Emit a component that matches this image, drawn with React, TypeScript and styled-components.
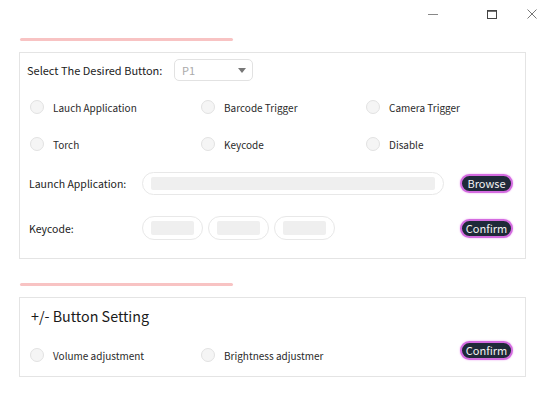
import React from "react";
import styled, { createGlobalStyle } from "styled-components";

const Global = createGlobalStyle`
  html, body { margin: 0; padding: 0; background: #ffffff; }
  body { font-family: "Noto Sans CJK SC", "Noto Sans", sans-serif; color: #222; }
  * { box-sizing: border-box; }
`;

const Page = styled.div`
  width: 547px;
  height: 405px;
  background: #fff;
  display: flex;
  flex-direction: column;
`;

const TitleBar = styled.div`
  height: 28px;
  display: flex;
  justify-content: flex-end;
  align-items: center;
  padding-right: 0;
`;

const WinBtn = styled.div<{ $gap: number }>`
  width: 30px;
  height: 28px;
  margin-left: ${(p) => p.$gap}px;
  display: flex;
  align-items: center;
  justify-content: center;
`;

const Accent = styled.div<{ $top: number }>`
  margin: ${(p) => p.$top}px 0 0 20px;
  width: 213px;
  height: 3px;
  border-radius: 2px;
  background: #f8c3c3;
`;

const Panel = styled.div<{ $top: number; $pt: number; $pb: number }>`
  margin: ${(p) => p.$top}px 0 0 19px;
  width: 507px;
  border: 1px solid #e4e4e4;
  padding: ${(p) => p.$pt}px 12px ${(p) => p.$pb}px 7px;
  display: flex;
  flex-direction: column;
`;

const Row = styled.div<{ $top?: number; $h: number; $left?: number }>`
  display: flex;
  align-items: center;
  height: ${(p) => p.$h}px;
  margin-top: ${(p) => p.$top ?? 0}px;
  padding-left: ${(p) => p.$left ?? 0}px;
`;

const Label = styled.div<{ $w: number; $fs: number }>`
  width: ${(p) => p.$w}px;
  font-size: ${(p) => p.$fs}px;
  color: #222;
  white-space: nowrap;
  flex: none;
`;

const Select = styled.div`
  width: 79px;
  height: 22px;
  border: 1px solid #e2e2e2;
  border-radius: 5px;
  display: flex;
  align-items: center;
  justify-content: space-between;
  padding: 0 6px 0 7px;
  font-size: 11px;
  color: #aaa;
`;

const Caret = styled.span`
  width: 0;
  height: 0;
  border-left: 4px solid transparent;
  border-right: 4px solid transparent;
  border-top: 5px solid #777;
`;

const RadioGrid = styled.div<{ $top: number }>`
  display: grid;
  grid-template-columns: 171px 165px auto;
  margin-top: ${(p) => p.$top}px;
  padding-left: 3px;
`;

const RadioItem = styled.label`
  display: flex;
  align-items: center;
  height: 16px;
  font-size: 10px;
  color: #2a2a2a;
  white-space: nowrap;
`;

const Circle = styled.span`
  width: 14px;
  height: 14px;
  border-radius: 50%;
  border: 1px solid #e2e2e2;
  background: #f5f5f5;
  margin-right: 9px;
  flex: none;
`;

const Field = styled.div<{ $w: number; $h: number }>`
  width: ${(p) => p.$w}px;
  height: ${(p) => p.$h}px;
  border: 1px solid #e8e8e8;
  border-radius: 12px;
  padding: 0 8px;
  display: flex;
  align-items: center;
  flex: none;
`;

const FieldFill = styled.div<{ $h: number }>`
  flex: 1;
  height: ${(p) => p.$h}px;
  background: #efefef;
  border-radius: 2px;
`;

const Fields = styled.div`
  display: flex;
  gap: 5px;
`;

const PillButton = styled.button<{ $mb?: number }>`
  margin-left: auto;
  margin-bottom: ${(p) => p.$mb ?? 0}px;
  width: 53px;
  height: 19px;
  border-radius: 10px;
  background: #1f2a39;
  border: 2px solid #d46be0;
  box-shadow: 0 0 2px #e9a0f0;
  color: #f2f2f2;
  font-family: "Noto Sans CJK SC", "Noto Sans", sans-serif;
  font-size: 11px;
  line-height: 1;
  padding: 0;
  display: flex;
  align-items: center;
  justify-content: center;
  flex: none;
`;

const Title = styled.div`
  font-size: 14.3px;
  line-height: 20px;
  color: #1a1a1a;
  padding-left: 4px;
`;

const BottomRow = styled.div<{ $top: number }>`
  display: flex;
  align-items: flex-end;
  margin-top: ${(p) => p.$top}px;
  height: 22px;
  padding-left: 3px;
`;

const BottomRadios = styled.div`
  display: grid;
  grid-template-columns: 171px auto;
`;

const Minimize = () => (
  <svg width="12" height="12" viewBox="0 0 12 12">
    <line x1="1" y1="6.5" x2="11" y2="6.5" stroke="#888" strokeWidth="1" />
  </svg>
);
const Maximize = () => (
  <svg width="12" height="12" viewBox="0 0 12 12">
    <rect x="1.5" y="2.5" width="9" height="8" fill="none" stroke="#444" strokeWidth="1" />
    <line x1="1.5" y1="3" x2="10.5" y2="3" stroke="#444" strokeWidth="1.5" />
  </svg>
);
const Close = () => (
  <svg width="12" height="12" viewBox="0 0 12 12">
    <path d="M1.5 1.5 L10.5 10.5 M10.5 1.5 L1.5 10.5" stroke="#777" strokeWidth="1" fill="none" />
  </svg>
);

const Radio = ({ text }: { text: string }) => (
  <RadioItem>
    <Circle />
    {text}
  </RadioItem>
);

export default function App() {
  return (
    <Page>
      <Global />
      <TitleBar>
        <WinBtn $gap={0}><Minimize /></WinBtn>
        <WinBtn $gap={29}><Maximize /></WinBtn>
        <WinBtn $gap={10}><Close /></WinBtn>
      </TitleBar>
      <Accent $top={10} />
      <Panel $top={11} $pt={6} $pb={18}>
        <Row $h={22}>
          <Label $w={147} $fs={11}>Select The Desired Button:</Label>
          <Select>
            P1
            <Caret />
          </Select>
        </Row>
        <RadioGrid $top={18}>
          <Radio text="Lauch Application" />
          <Radio text="Barcode Trigger" />
          <Radio text="Camera Trigger" />
        </RadioGrid>
        <RadioGrid $top={21}>
          <Radio text="Torch" />
          <Radio text="Keycode" />
          <Radio text="Disable" />
        </RadioGrid>
        <Row $h={23} $top={20} $left={2}>
          <Label $w={113} $fs={10.5}>Launch Application:</Label>
          <Field $w={302} $h={23}>
            <FieldFill $h={13} />
          </Field>
          <PillButton>Browse</PillButton>
        </Row>
        <Row $h={24} $top={21} $left={2}>
          <Label $w={113} $fs={10.5}>Keycode:</Label>
          <Fields>
            <Field $w={61} $h={24}><FieldFill $h={14} /></Field>
            <Field $w={61} $h={24}><FieldFill $h={14} /></Field>
            <Field $w={61} $h={24}><FieldFill $h={14} /></Field>
          </Fields>
          <PillButton>Confirm</PillButton>
        </Row>
      </Panel>
      <Accent $top={24} />
      <Panel $top={11} $pt={8} $pb={13}>
        <Title>+/- Button Setting</Title>
        <BottomRow $top={15}>
          <BottomRadios>
            <Radio text="Volume adjustment" />
            <Radio text="Brightness adjustmer" />
          </BottomRadios>
          <PillButton $mb={3}>Confirm</PillButton>
        </BottomRow>
      </Panel>
    </Page>
  );
}
